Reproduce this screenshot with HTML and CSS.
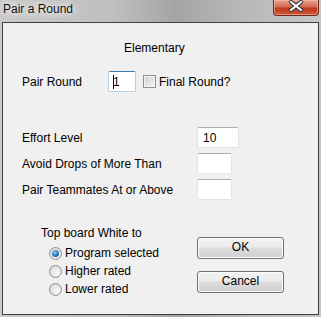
FILE: index.html
```html
<!DOCTYPE html>
<html lang="en">
<head>
    <meta charset="UTF-8">
    <title>Pair a Round</title>
    <link rel="stylesheet" href="styles.css">
</head>
<body>

<div class="window">
    <!-- Title bar -->
    <div class="titlebar">
        <span class="title">Pair a Round</span>
        <div class="close">
            <svg width="46" height="16" viewBox="0 0 46 16">
                <path d="M18 3 L28 11 M28 3 L18 11" stroke="#3b3b3b" stroke-width="4.2" stroke-linecap="round"/>
                <path d="M18 3 L28 11 M28 3 L18 11" stroke="#fff" stroke-width="2.2" stroke-linecap="round"/>
            </svg>
        </div>
    </div>

    <!-- Client area -->
    <div class="client">
        <div class="heading">Elementary</div>

        <div class="row round-row">
            <span class="label round-label">Pair Round</span>
            <div class="field focused round-field"><span class="caret"></span>1</div>
            <span class="checkbox"></span>
            <span class="check-text">Final Round?</span>
        </div>

        <div class="row first">
            <span class="label">Effort Level</span>
            <div class="field wide">10</div>
        </div>
        <div class="row">
            <span class="label">Avoid Drops of More Than</span>
            <div class="field"></div>
        </div>
        <div class="row">
            <span class="label">Pair Teammates At or Above</span>
            <div class="field"></div>
        </div>

        <div class="bottom">
            <div class="group">
                <div class="group-title">Top board White to</div>
                <div class="option"><span class="radio checked"></span>Program selected</div>
                <div class="option"><span class="radio"></span>Higher rated</div>
                <div class="option"><span class="radio"></span>Lower rated</div>
            </div>
            <div class="buttons">
                <div class="button">OK</div>
                <div class="button">Cancel</div>
            </div>
        </div>
    </div>
</div>

</body>
</html>
```

FILE: styles.css
```css
body {
    margin: 0;
    font-family: "Liberation Sans", Arial, sans-serif;
    font-size: 12px;
    color: #000;
}
.window {
    width: 321px;
    height: 317px;
    box-sizing: border-box;
    padding: 0 2px 2px 2px;
    display: flex;
    flex-direction: column;
    background: linear-gradient(90deg, #c9c9c9 0%, #bfbfbf 35%, #a4a4a4 55%, #b8b8b8 75%, #c6c6c6 100%);
}
.titlebar {
    height: 22px;
    display: flex;
    justify-content: space-between;
    align-items: flex-start;
    flex-shrink: 0;
}
.title {
    padding: 2px 0 0 1px;
    line-height: 15px;
    color: #111;
    text-shadow: 0 0 6px #fff, 0 0 10px #fff;
}
.close {
    width: 46px;
    height: 16px;
    box-sizing: border-box;
    border: 1px solid #6e2b20;
    border-top: none;
    border-radius: 0 0 4px 4px;
    background: linear-gradient(#e9a390 0%, #d56a51 45%, #c0391d 55%, #cf5a38 100%);
    box-shadow: inset 0 0 0 1px rgba(255, 200, 180, 0.5);
}
.close svg {
    display: block;
    margin: -1px 0 0 -1px;
}
.client {
    flex: 1;
    border: 1px solid #3f3f3f;
    background: #f0f0f0;
    padding: 0 0 0 19px;
}
.heading {
    margin: 18px 0 0 102px;
    line-height: 14px;
}
.row {
    display: flex;
    align-items: center;
    height: 21px;
    margin-top: 5px;
}
.round-row {
    margin-top: 16px;
}
.row.first {
    margin-top: 35px;
}
.label {
    width: 175px;
}
.round-label {
    width: 86px;
}
.field {
    width: 35px;
    height: 21px;
    box-sizing: border-box;
    background: #fff;
    border: 1px solid #e2e3ea;
    border-top-color: #abadb3;
    border-radius: 2px;
    padding: 3px 0 0 5px;
    line-height: 14px;
}
.field.wide {
    width: 42px;
}
.field.focused {
    border-color: #b5cfe7;
    border-top-color: #3d7bad;
}
.round-field {
    width: 28px;
    padding-left: 4px;
}
.caret {
    display: inline-block;
    width: 1px;
    height: 14px;
    background: #000;
    vertical-align: top;
    margin-right: -1px;
}
.checkbox {
    width: 13px;
    height: 13px;
    box-sizing: border-box;
    margin-left: 7px;
    border: 1px solid #8e8f8f;
    background: linear-gradient(135deg, #cbcfd5, #f6f6f6);
    box-shadow: inset 0 0 0 1px #f4f4f4;
}
.check-text {
    margin-left: 3px;
}
.bottom {
    display: flex;
    margin-top: 26px;
}
.group {
    width: 156px;
    margin-left: 19px;
}
.group-title {
    line-height: 14px;
    margin-bottom: 4px;
}
.option {
    display: flex;
    align-items: center;
    height: 18px;
    padding-left: 8px;
}
.radio {
    width: 13px;
    height: 13px;
    box-sizing: border-box;
    border-radius: 50%;
    border: 1px solid #8e8f8f;
    background: radial-gradient(circle at 65% 65%, #f8f8f8, #d4d4d4);
    margin-right: 3px;
    display: flex;
    align-items: center;
    justify-content: center;
}
.radio.checked::after {
    content: "";
    width: 7px;
    height: 7px;
    border-radius: 50%;
    background: radial-gradient(circle at 40% 35%, #8cd0f5, #2a76b4 55%, #0f3f73);
}
.buttons {
    margin-top: 11px;
    display: flex;
    flex-direction: column;
    gap: 12px;
}
.button {
    width: 87px;
    height: 22px;
    box-sizing: border-box;
    border: 1px solid #707070;
    border-radius: 3px;
    background: linear-gradient(#f2f2f2 0%, #ebebeb 45%, #dddddd 50%, #cfcfcf 100%);
    box-shadow: inset 0 0 0 1px #fcfcfc;
    text-align: center;
    line-height: 19px;
}
```
